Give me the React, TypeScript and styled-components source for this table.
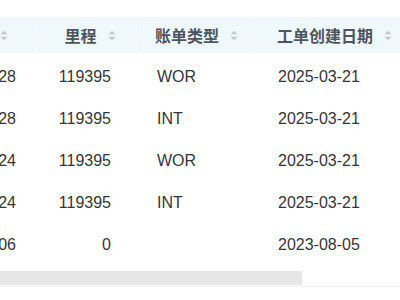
import React from "react";
import styled, { createGlobalStyle } from "styled-components";

const Global = createGlobalStyle`
  html, body { margin: 0; padding: 0; background: #fff; }
  body { font-family: "Liberation Sans", "Noto Sans CJK SC", sans-serif; }
`;

const Page = styled.div`
  width: 400px;
  height: 300px;
  overflow: hidden;
  padding-top: 17px;
  box-sizing: border-box;
`;

const Table = styled.div`
  width: 420px;
  display: flex;
  flex-direction: column;
`;

const cols = [37, 107, 106, 170];

const HeadRow = styled.div`
  display: flex;
  height: 36px;
  background: #eff8fc;
`;

const HeadCell = styled.div<{ $w: number; $edge?: boolean }>`
  width: ${(p) => p.$w}px;
  flex: none;
  box-sizing: border-box;
  display: flex;
  align-items: center;
  justify-content: ${(p) => (p.$edge ? "flex-end" : "center")};
  padding-right: ${(p) => (p.$edge ? "28px" : "0")};
  gap: 11px;
  overflow: hidden;
  white-space: nowrap;
  border-right: 1px solid #f8fcfe;
  font-size: 16px;
  font-weight: bold;
  color: #4f555e;
  font-family: "Noto Sans CJK SC", "Liberation Sans", sans-serif;
`;

const Row = styled.div`
  display: flex;
  height: 42px;
`;

const Cell = styled.div<{ $w: number; $align: "left" | "right" | "clip"; $pad: number }>`
  width: ${(p) => p.$w}px;
  flex: none;
  box-sizing: border-box;
  display: flex;
  align-items: center;
  overflow: hidden;
  white-space: nowrap;
  padding-top: 5px;
  justify-content: ${(p) => (p.$align === "left" ? "flex-start" : "flex-end")};
  padding-left: ${(p) => (p.$align === "left" ? p.$pad : 0)}px;
  padding-right: ${(p) => (p.$align === "left" ? 0 : p.$pad)}px;
  font-size: 16px;
  color: #333538;
`;

const ScrollArea = styled.div`
  height: 24px;
  box-sizing: border-box;
  padding-top: 8px;
  border-bottom: 1px solid #f0f0f0;
  width: 400px;
`;

const Thumb = styled.div`
  width: 302px;
  height: 14px;
  background: #e6e6e6;
`;

const SortIcon = () => (
  <svg width="8" height="11" viewBox="0 0 8 11" style={{ flex: "none" }}>
    <path d="M0.5 4.2 L4 0.8 L7.5 4.2 Z" fill="#c3c7cd" />
    <path d="M0.5 6.8 L4 10.2 L7.5 6.8 Z" fill="#c3c7cd" />
  </svg>
);

const rows = [
  ["2025-03-28", "119395", "WOR", "2025-03-21"],
  ["2025-03-28", "119395", "INT", "2025-03-21"],
  ["2025-03-24", "119395", "WOR", "2025-03-21"],
  ["2025-03-24", "119395", "INT", "2025-03-21"],
  ["2023-08-06", "0", "", "2023-08-05"],
];

export default function App() {
  return (
    <Page>
      <Global />
      <Table>
        <HeadRow>
          <HeadCell $w={cols[0]} $edge>
            <span>日期</span>
            <SortIcon />
          </HeadCell>
          <HeadCell $w={cols[1]}>
            <span>里程</span>
            <SortIcon />
          </HeadCell>
          <HeadCell $w={cols[2]}>
            <span>账单类型</span>
            <SortIcon />
          </HeadCell>
          <HeadCell $w={cols[3]}>
            <span>工单创建日期</span>
            <SortIcon />
          </HeadCell>
        </HeadRow>
        {rows.map((r, i) => (
          <Row key={i}>
            <Cell $w={cols[0]} $align="clip" $pad={21}>{r[0]}</Cell>
            <Cell $w={cols[1]} $align="right" $pad={33}>{r[1]}</Cell>
            <Cell $w={cols[2]} $align="left" $pad={13}>{r[2]}</Cell>
            <Cell $w={cols[3]} $align="left" $pad={28}>{r[3]}</Cell>
          </Row>
        ))}
      </Table>
      <ScrollArea>
        <Thumb />
      </ScrollArea>
    </Page>
  );
}
